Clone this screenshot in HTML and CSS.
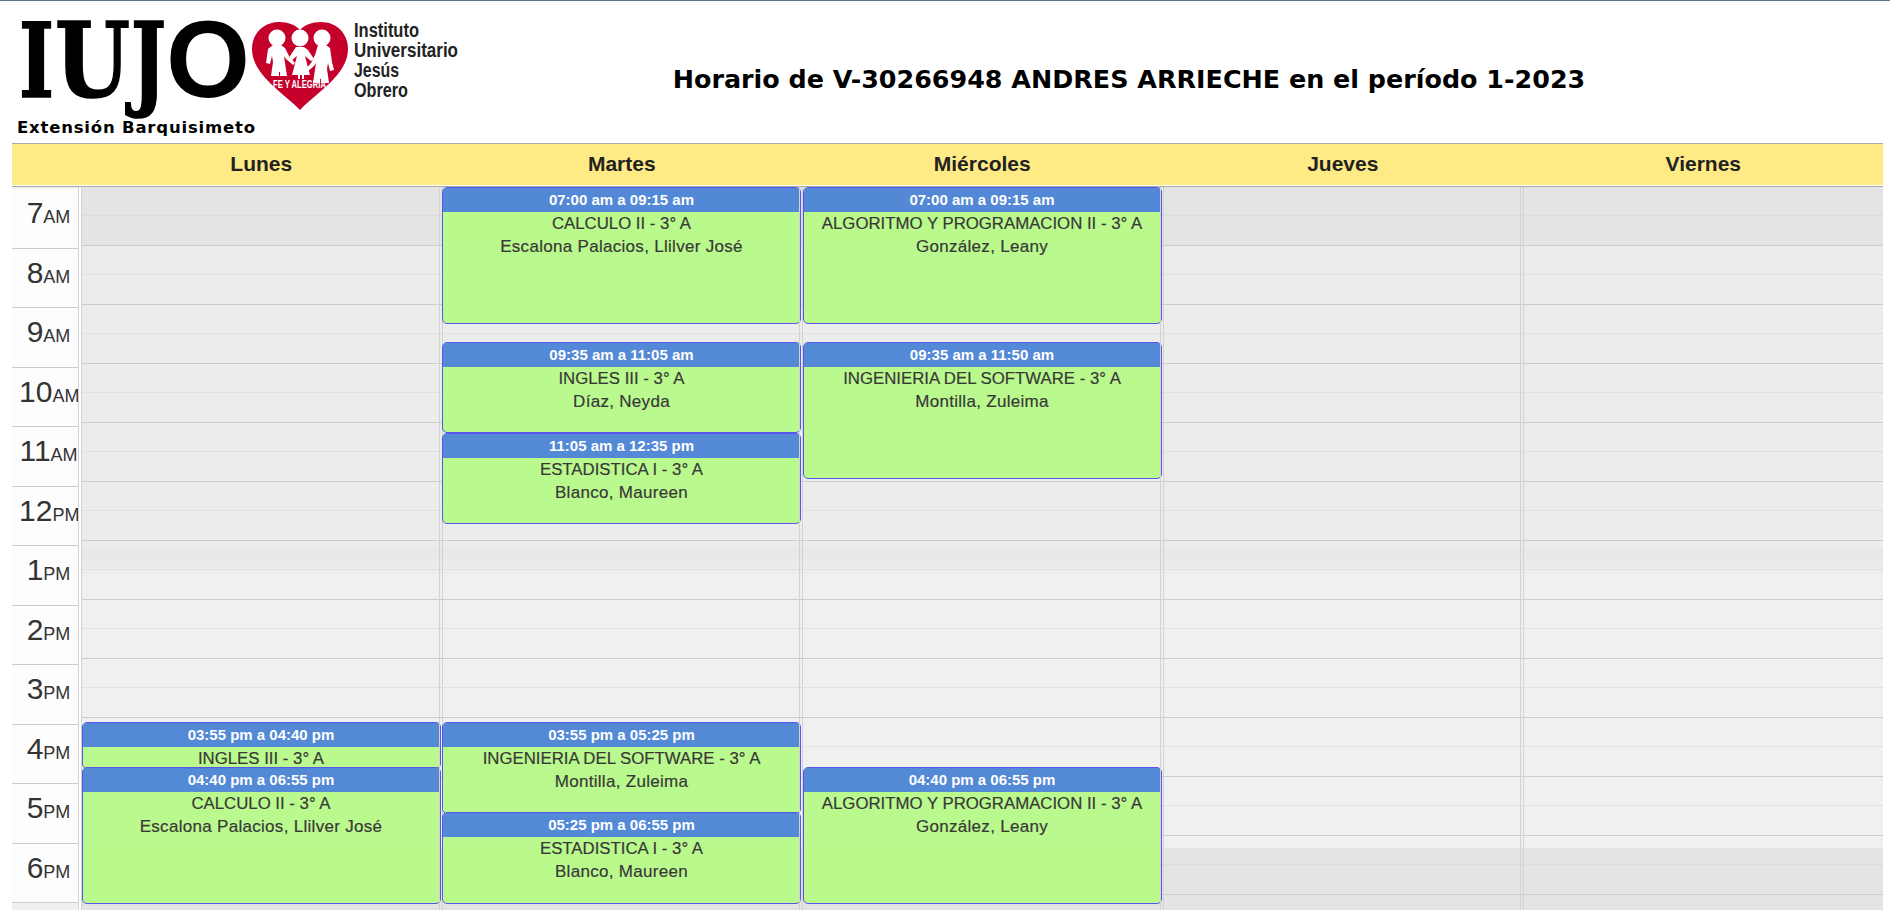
FILE: index.html
```html
<!DOCTYPE html>
<html lang="es">
<head>
<meta charset="utf-8">
<title>Horario</title>
<link rel="stylesheet" href="styles.css">
</head>
<body>
<header class="top">
  <div class="brand">
    <svg class="logo" width="470" height="112" viewBox="0 0 470 112" aria-label="IUJO Instituto Universitario Jesús Obrero">
      <text class="logo-slab" x="19" y="96" textLength="35" lengthAdjust="spacingAndGlyphs">I</text>
      <text class="logo-slab" x="55" y="96" textLength="75" lengthAdjust="spacingAndGlyphs">U</text>
      <text class="logo-slab" x="131" y="96" textLength="35" lengthAdjust="spacingAndGlyphs">J</text>
      <text class="logo-o" x="166" y="96" textLength="84" lengthAdjust="spacingAndGlyphs">O</text>
      <path class="heart" d="M300 109C284 92 252 74 252 48C252 32 264 21 279 21C288 21 296 24 300 29C304 24 312 21 321 21C336 21 348 32 348 48C348 74 316 92 300 109Z"/>
      <g class="kids">
        <circle cx="277" cy="37" r="8.5"/><circle cx="300" cy="37" r="8.5"/><circle cx="322" cy="37" r="8.5"/>
        <path d="M273 44h8l4 3 4 8 6 7-2 2-7-6-2-3 3 20h-7v-4h-1v4h-8l2-14-1-6-2 8-4-1 2-14z"/>
        <path d="M296 46h8l4 3 6 9-3 2-6-5 5 19h-6v4h-2v-4h-2v4h-2v-4h-6l5-19-6 5-3-2 6-9z"/>
        <path d="M318 44h8l4 3 2 14 2 8-4 1-2-8-1 6 2 14h-8v-4h-1v4h-7l3-20-2 3-7 6-2-2 6-7 4-8z"/>
      </g>
      <text class="logo-tag" x="273" y="87" textLength="53" lengthAdjust="spacingAndGlyphs">FE Y ALEGRIA</text>
      <text class="logo-name" x="354" y="36" textLength="65" lengthAdjust="spacingAndGlyphs">Instituto</text>
      <text class="logo-name" x="354" y="56" textLength="104" lengthAdjust="spacingAndGlyphs">Universitario</text>
      <text class="logo-name" x="354" y="76" textLength="45" lengthAdjust="spacingAndGlyphs">Jesús</text>
      <text class="logo-name" x="354" y="96" textLength="54" lengthAdjust="spacingAndGlyphs">Obrero</text>
    </svg>
    <div class="branch">Extensión Barquisimeto</div>
  </div>
  <h1 class="title">Horario de V-30266948 ANDRES ARRIECHE en el período 1-2023</h1>
</header>

<main class="calendar">
  <div class="days">
    <div class="days-gutter"></div>
    <div class="day">Lunes</div>
    <div class="day">Martes</div>
    <div class="day">Miércoles</div>
    <div class="day">Jueves</div>
    <div class="day">Viernes</div>
  </div>
  <div class="body">
    <div class="hours">
      <div class="hour">7<small>AM</small></div>
      <div class="hour">8<small>AM</small></div>
      <div class="hour">9<small>AM</small></div>
      <div class="hour">10<small>AM</small></div>
      <div class="hour">11<small>AM</small></div>
      <div class="hour">12<small>PM</small></div>
      <div class="hour">1<small>PM</small></div>
      <div class="hour">2<small>PM</small></div>
      <div class="hour">3<small>PM</small></div>
      <div class="hour">4<small>PM</small></div>
      <div class="hour">5<small>PM</small></div>
      <div class="hour">6<small>PM</small></div>
    </div>
    <div class="grid">
      <div class="rows">
        <div class="row"></div><div class="row"></div><div class="row"></div><div class="row"></div>
        <div class="row"></div><div class="row"></div><div class="row"></div><div class="row"></div>
        <div class="row"></div><div class="row"></div><div class="row"></div><div class="row"></div>
      </div>
      <div class="cols">
        <div class="col">
          <article class="event" style="top:535px;height:47px"><div class="event-time">03:55 pm a 04:40 pm</div><div class="subject">INGLES III - 3° A</div></article>
          <article class="event" style="top:580px;height:137px"><div class="event-time">04:40 pm a 06:55 pm</div><div class="subject">CALCULO II - 3° A</div><div class="person">Escalona Palacios, Llilver José</div></article>
        </div>
        <div class="col">
          <article class="event" style="top:0;height:137px"><div class="event-time">07:00 am a 09:15 am</div><div class="subject">CALCULO II - 3° A</div><div class="person">Escalona Palacios, Llilver José</div></article>
          <article class="event" style="top:155px;height:91px"><div class="event-time">09:35 am a 11:05 am</div><div class="subject">INGLES III - 3° A</div><div class="person">Díaz, Neyda</div></article>
          <article class="event" style="top:246px;height:91px"><div class="event-time">11:05 am a 12:35 pm</div><div class="subject">ESTADISTICA I - 3° A</div><div class="person">Blanco, Maureen</div></article>
          <article class="event" style="top:535px;height:92px"><div class="event-time">03:55 pm a 05:25 pm</div><div class="subject">INGENIERIA DEL SOFTWARE - 3° A</div><div class="person">Montilla, Zuleima</div></article>
          <article class="event" style="top:625px;height:92px"><div class="event-time">05:25 pm a 06:55 pm</div><div class="subject">ESTADISTICA I - 3° A</div><div class="person">Blanco, Maureen</div></article>
        </div>
        <div class="col">
          <article class="event" style="top:0;height:137px"><div class="event-time">07:00 am a 09:15 am</div><div class="subject">ALGORITMO Y PROGRAMACION II - 3° A</div><div class="person">González, Leany</div></article>
          <article class="event" style="top:155px;height:137px"><div class="event-time">09:35 am a 11:50 am</div><div class="subject">INGENIERIA DEL SOFTWARE - 3° A</div><div class="person">Montilla, Zuleima</div></article>
          <article class="event" style="top:580px;height:137px"><div class="event-time">04:40 pm a 06:55 pm</div><div class="subject">ALGORITMO Y PROGRAMACION II - 3° A</div><div class="person">González, Leany</div></article>
        </div>
        <div class="col"></div>
        <div class="col"></div>
      </div>
    </div>
  </div>
</main>
</body>
</html>
```
FILE: styles.css
```css
html, body {
  margin: 0;
  height: 910px;
  overflow: hidden;
  background: #fff;
}
body {
  border-top: 1px solid #5f7484;
  box-sizing: border-box;
  font-family: "Liberation Sans", Arial, sans-serif;
  color: #333;
}
.top {
  display: flex;
  height: 142px;
}
.brand {
  width: 460px;
  flex: none;
}
.logo {
  display: block;
  overflow: visible;
}
.logo-slab {
  font: 700 102px "DejaVu Serif", serif;
  fill: #000;
  stroke: #000;
  stroke-width: 1.6px;
}
.logo-o {
  font: 700 110px "Liberation Sans", sans-serif;
  fill: #000;
}
.heart { fill: #c4002b; }
.kids { fill: #fff; }
.logo-tag {
  font: 700 10px "Liberation Sans", sans-serif;
  fill: #fff;
}
.logo-name {
  font: 700 20.5px "Liberation Sans", sans-serif;
  fill: #222;
}
.branch {
  margin: 6px 0 0 17px;
  font: 700 16.5px/18px "DejaVu Sans", Verdana, sans-serif;
  letter-spacing: .8px;
  color: #000;
  white-space: nowrap;
}
.title {
  flex: 1;
  margin: 0;
  padding: 60px 92px 0 0;
  text-align: center;
  font: 700 25.4px/36px "DejaVu Sans", Verdana, sans-serif;
  color: #000;
  white-space: nowrap;
}
.calendar {
  margin: 0 7px 0 12px;
}
.days {
  display: flex;
  height: 42px;
  background: #ffeb85;
  border-top: 1px solid #aaa;
  border-bottom: 1px solid #aaa;
  box-shadow: inset 0 -1px #fff;
}
.days-gutter {
  width: 69px;
  flex: none;
}
.day {
  width: 360.5px;
  flex: none;
  text-align: center;
  font-weight: 700;
  font-size: 21px;
  line-height: 40px;
  color: #222;
}
.body {
  display: flex;
}
.hours {
  width: 66px;
  flex: none;
  padding-top: 2px;
  background: #f0f0f0;
}
.hour {
  box-sizing: border-box;
  height: 59.5px;
  padding-left: 7px;
  text-align: center;
  font-size: 30px;
  line-height: 47px;
  color: #333;
  background: #fdfdfd;
  border-bottom: 1px solid #ccc;
  white-space: nowrap;
}
.hour small {
  font-size: 18px;
}
.grid {
  position: relative;
  flex: 1;
  height: 724px;
}
.rows {
  height: 100%;
  margin-left: 3px;
  background: linear-gradient(to bottom,
    #e4e4e4 0, #e4e4e4 59px,
    #ececec 59px, #ececec 361px,
    #e7e7e7 361px, #eaeaea 375px, #f0f0f0 392px,
    #f0f0f0 661px,
    #e4e4e4 661px);
}
.row {
  box-sizing: border-box;
  height: 59px;
  border-bottom: 1px solid #ccc;
}
.row::before {
  content: "";
  display: block;
  box-sizing: border-box;
  height: 29px;
  border-bottom: 1px dotted #d4d4d4;
}
.cols {
  position: absolute;
  inset: 0;
  display: grid;
  grid-template-columns: repeat(5, 360.5px);
}
.col {
  position: relative;
  background: linear-gradient(to right,
    #d2d2d2 0, #d2d2d2 1px,
    transparent 1px, transparent 3px,
    #d2d2d2 3px, #d2d2d2 4px,
    transparent 4px);
}
.event {
  position: absolute;
  left: 3.5px;
  right: -2px;
  box-sizing: border-box;
  overflow: hidden;
  border: 1px solid #5252ee;
  border-radius: 5px;
  background: #b9fa8a;
  opacity: .97;
  text-align: center;
}
.event-time {
  height: 24px;
  background: #4f86d6;
  color: #fff;
  font-weight: 700;
  font-size: 15px;
  line-height: 24px;
}
.subject,
.person {
  line-height: 23px;
  color: #333;
  -webkit-text-stroke: .2px #333;
  white-space: nowrap;
}
.subject {
  font-size: 16.8px;
}
.person {
  font-size: 17px;
  letter-spacing: .3px;
}
```
